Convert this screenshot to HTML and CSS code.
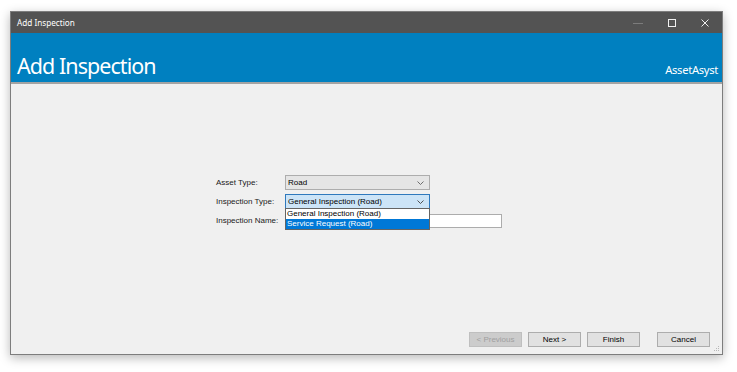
FILE: index.html
```html
<!DOCTYPE html>
<html>
<head>
<meta charset="utf-8">
<link rel="stylesheet" href="styles.css">
</head>
<body>
<div class="window">
  <div class="titlebar">
    <span class="title">Add Inspection</span>
    <div class="controls">
      <span class="ctl min"><svg width="10" height="10" viewBox="0 0 10 10"><path d="M0 5.5h10" stroke="#7c7c7c" stroke-width="1"/></svg></span>
      <span class="ctl max"><svg width="10" height="10" viewBox="0 0 10 10"><rect x="1.5" y="1.5" width="7" height="7" fill="none" stroke="#f0f0f0" stroke-width="1"/></svg></span>
      <span class="ctl close"><svg width="10" height="10" viewBox="0 0 10 10"><path d="M1.5 1.5l7 7M8.5 1.5l-7 7" stroke="#f0f0f0" stroke-width="1"/></svg></span>
    </div>
  </div>
  <div class="header">
    <h1 class="heading">Add Inspection</h1>
    <span class="brand">AssetAsyst</span>
  </div>
  <div class="content">
    <div class="form">
      <div class="row">
        <span class="label">Asset Type:</span>
        <div class="combo">
          <span class="combo-text">Road</span>
          <svg class="chev" width="7" height="4" viewBox="0 0 7 4"><path d="M0.5 0.5l3 3 3-3" fill="none" stroke="#606060" stroke-width="0.9"/></svg>
        </div>
      </div>
      <div class="row">
        <span class="label">Inspection Type:</span>
        <div class="combo-wrap">
          <div class="combo focused">
            <span class="combo-text">General Inspection (Road)</span>
            <svg class="chev" width="7" height="4" viewBox="0 0 7 4"><path d="M0.5 0.5l3 3 3-3" fill="none" stroke="#404040" stroke-width="0.9"/></svg>
          </div>
          <ul class="dropdown">
            <li class="item">General Inspection (Road)</li>
            <li class="item selected">Service Request (Road)</li>
          </ul>
        </div>
      </div>
      <div class="row">
        <span class="label">Inspection Name:</span>
        <div class="textbox"></div>
      </div>
    </div>
    <div class="buttons">
      <button class="btn disabled">&lt; Previous</button>
      <button class="btn">Next &gt;</button>
      <button class="btn">Finish</button>
      <button class="btn cancel">Cancel</button>
    </div>
    <svg class="grip" width="6" height="6" viewBox="0 0 6 6"><g fill="#b8b8b8"><rect x="4" y="0" width="1" height="1"/><rect x="2" y="2" width="1" height="1"/><rect x="4" y="2" width="1" height="1"/><rect x="0" y="4" width="1" height="1"/><rect x="2" y="4" width="1" height="1"/><rect x="4" y="4" width="1" height="1"/></g></svg>
  </div>
</div>
</body>
</html>
```

FILE: styles.css
```css
* { box-sizing: border-box; }
html, body { margin: 0; padding: 0; background: #ffffff; }
body {
  width: 737px;
  height: 372px;
  padding: 11px 0 0 10px;
  overflow: hidden;
  font-family: "Liberation Sans", Arial, sans-serif;
}
.window {
  width: 713px;
  height: 344px;
  border: 1px solid #7d7d7d;
  background: #f0f0f0;
  display: flex;
  flex-direction: column;
  box-shadow: 0 3px 10px rgba(0,0,0,0.28);
}
.titlebar {
  height: 21px;
  background: #535353;
  display: flex;
  align-items: center;
  justify-content: space-between;
  padding-left: 6px;
  flex: none;
}
.title {
  color: #ffffff;
  font-family: "Noto Sans", "Open Sans", sans-serif;
  font-size: 8.2px;
}
.controls { display: flex; height: 100%; }
.ctl {
  width: 34px;
  display: flex;
  align-items: center;
  justify-content: center;
}
.ctl.close { width: 33px; padding-right: 2px; }
.header {
  height: 51px;
  background: #0080c0;
  border-bottom: 2px solid #a3a3a3;
  display: flex;
  align-items: flex-end;
  justify-content: space-between;
  padding: 0 4px 3px 6px;
  flex: none;
  color: #ffffff;
  font-family: "Noto Sans", "Open Sans", sans-serif;
}
.heading {
  margin: 0;
  font-weight: normal;
  font-size: 21.5px;
  letter-spacing: -0.95px;
  line-height: 26px;
}
.brand {
  font-size: 11.2px;
  letter-spacing: -0.3px;
  line-height: 14px;
  margin-bottom: 2px;
}
.content {
  flex: 1;
  display: flex;
  flex-direction: column;
  justify-content: space-between;
  position: relative;
}
.form {
  margin: 91px 0 0 205px;
  display: flex;
  flex-direction: column;
  gap: 4px;
}
.row {
  display: flex;
  align-items: center;
  height: 15px;
}
.label {
  width: 69px;
  font-size: 8px;
  color: #1a1a1a;
}
.combo-wrap { position: relative; }
.combo {
  width: 145px;
  height: 15px;
  background: #e5e5e5;
  border: 1px solid #adadad;
  display: flex;
  align-items: center;
  justify-content: space-between;
  padding: 0 5px 0 2px;
  font-size: 8px;
  color: #000;
}
.combo.focused {
  background: #cce4f7;
  border-color: #2f79bd;
}
.chev { display: block; }
.dropdown {
  position: absolute;
  left: 0;
  top: 14px;
  width: 145px;
  margin: 0;
  padding: 0;
  list-style: none;
  border: 1px solid #646464;
  background: #ffffff;
  z-index: 2;
}
.item {
  height: 10px;
  line-height: 10px;
  font-size: 8px;
  padding-left: 1px;
  color: #000;
}
.item.selected {
  background: #0078d7;
  color: #ffffff;
}
.textbox {
  width: 217px;
  height: 14px;
  background: #ffffff;
  border: 1px solid #acacac;
  margin-top: 1px;
}
.buttons {
  display: flex;
  justify-content: flex-end;
  gap: 6px;
  padding: 0 12px 7px 0;
}
.btn {
  width: 53px;
  height: 15px;
  background: #e1e1e1;
  border: 1px solid #adadad;
  font-family: "Liberation Sans", Arial, sans-serif;
  font-size: 8px;
  color: #000;
  padding: 0;
  margin: 0;
}
.btn.disabled {
  background: #cccccc;
  border-color: #bfbfbf;
  color: #a0a0a0;
}
.btn.cancel { margin-left: 11px; }
.grip {
  position: absolute;
  right: 2px;
  bottom: 2px;
}
```
